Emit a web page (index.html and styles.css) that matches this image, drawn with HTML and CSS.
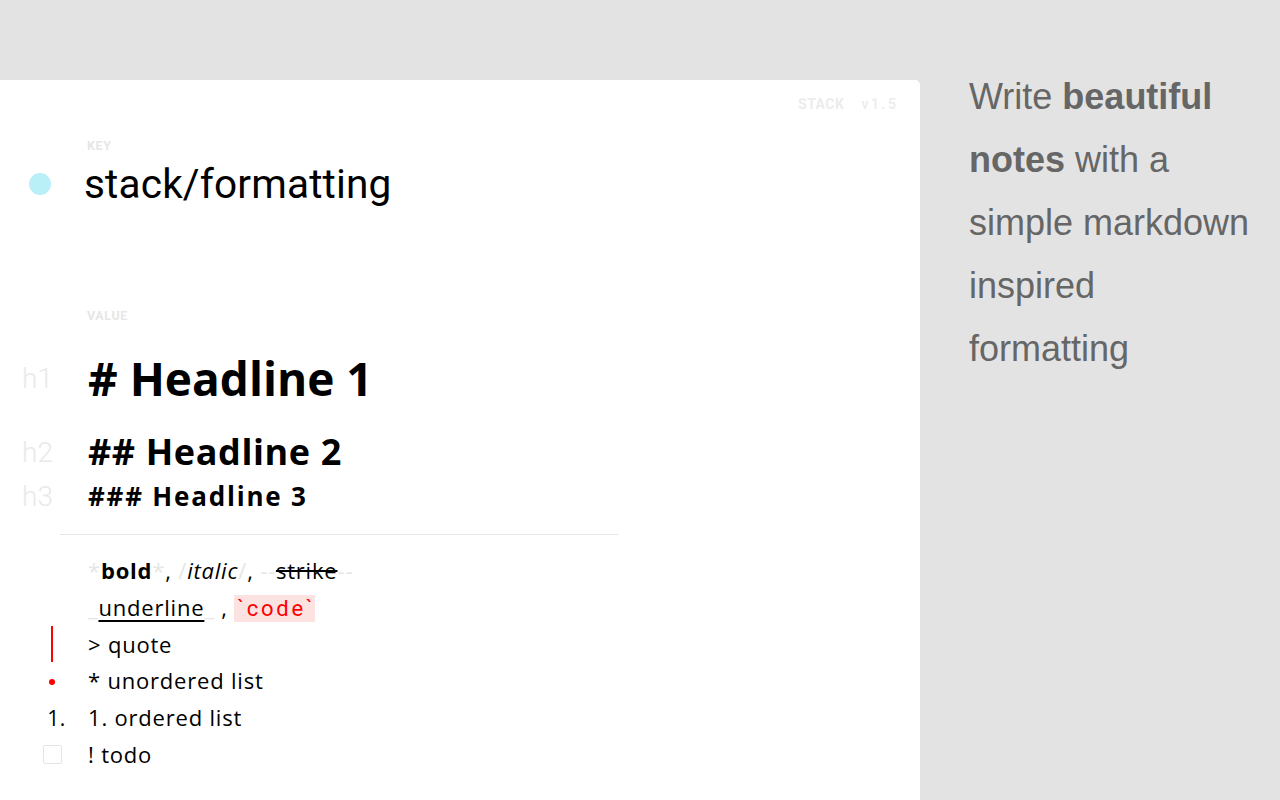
FILE: index.html
```html
<!DOCTYPE html>
<html lang="en">
<head>
<meta charset="utf-8">
<title>Stack – formatting</title>
<link rel="stylesheet" href="styles.css">
</head>
<body>
<div class="page">
  <main class="card">
    <div class="meta"><span class="brand">STACK</span><span class="ver">v1.5</span></div>

    <section class="key">
      <div class="label">KEY</div>
      <div class="row key-row">
        <span class="gutter"><span class="dot"></span></span>
        <span class="key-text">stack/formatting</span>
      </div>
    </section>

    <section class="value">
      <div class="label">VALUE</div>
      <div class="row head h1"><span class="gutter tag">h1</span><span class="text"># Headline 1</span></div>
      <div class="row head h2"><span class="gutter tag">h2</span><span class="text">## Headline 2</span></div>
      <div class="row head h3"><span class="gutter tag">h3</span><span class="text">### Headline 3</span></div>
      <div class="rule"></div>
      <div class="lines">
        <div class="row line"><span class="gutter"></span><span class="text"><span class="faint">*</span><b>bold</b><span class="faint">*</span>, <span class="faint">/</span><i>italic</i><span class="faint">/</span>, <span class="faint">--</span><span class="struck">strike</span><span class="faint">--</span></span></div>
        <div class="row line"><span class="gutter"></span><span class="text"><span class="faint">_</span><span class="under">underline</span><span class="faint">_</span> , <code class="code">`code`</code></span></div>
        <div class="row line"><span class="gutter"><span class="mark"><span class="quote-bar"></span></span></span><span class="text">&gt; quote</span></div>
        <div class="row line"><span class="gutter"><span class="mark"><span class="bullet"></span></span></span><span class="text">* unordered list</span></div>
        <div class="row line"><span class="gutter"><span class="mark num">1.</span></span><span class="text">1. ordered list</span></div>
        <div class="row line"><span class="gutter"><span class="mark"><span class="check"></span></span></span><span class="text">! todo</span></div>
      </div>
    </section>
  </main>

  <aside class="pitch">
    <p>Write <strong>beautiful notes</strong> with a simple markdown inspired formatting</p>
  </aside>
</div>
</body>
</html>
```

FILE: styles.css
```css
* { box-sizing: border-box; }

html, body {
  margin: 0;
  height: 100%;
}

body {
  background: #e3e3e3;
  font-family: "Open Sans", "Noto Sans", sans-serif;
  color: #000;
}

.page {
  display: flex;
  height: 800px;
  overflow: hidden;
}

.card {
  width: 920px;
  flex: none;
  margin-top: 80px;
  height: 720px;
  background: #fff;
  border-radius: 0 5px 0 0;
  padding-top: 15px;
}

.meta {
  display: flex;
  justify-content: flex-end;
  gap: 17px;
  padding-right: 24px;
  font-family: Roboto, sans-serif;
  font-weight: 700;
  font-size: 14px;
  line-height: 18px;
  color: #ececec;
}

.brand { letter-spacing: 0.5px; }
.ver { letter-spacing: 2.6px; font-weight: 500; margin-right: -2.6px; }

.label {
  margin-left: 87px;
  font-family: Roboto, sans-serif;
  font-weight: 700;
  font-size: 12.5px;
  line-height: 14px;
  letter-spacing: 0.6px;
  color: #e6e6e6;
}

.key .label { margin-top: 26px; }

.row {
  display: flex;
  align-items: center;
}

.gutter {
  width: 87px;
  flex: none;
  display: flex;
  align-items: center;
}

.key-row {
  margin-top: 7px;
  height: 48px;
}

.dot {
  width: 22px;
  height: 22px;
  border-radius: 50%;
  background: #b9f0f8;
  margin-left: 29px;
}

.key-text {
  font-family: Roboto, sans-serif;
  font-size: 40.6px;
  line-height: 48px;
  margin-left: -3px;
  letter-spacing: 0.15px;
  color: #000;
}

.value .label { margin-top: 101px; }

.tag {
  font-family: Roboto, sans-serif;
  font-weight: 300;
  font-size: 28px;
  color: #e9e9e9;
  padding-left: 22px;
}

.head .text { font-weight: 700; margin-left: 1px; }

.h1 { margin-top: 25px; height: 60px; }
.h1 .text { font-size: 46px; line-height: 60px; }

.h2 { margin-top: 20px; height: 48px; }
.h2 .text { font-size: 36px; line-height: 48px; letter-spacing: 0.6px; }

.h3 { margin-top: 2px; height: 36px; }
.h3 .text { font-size: 26px; line-height: 36px; letter-spacing: 1.8px; }

.rule {
  margin: 20px 0 0 60px;
  width: 558px;
  height: 1px;
  background: #e6e6e6;
}

.lines { margin-top: 17px; }

.line {
  height: 36.8px;
}

.line .text {
  font-size: 22px;
  line-height: 36.8px;
  letter-spacing: 0.8px;
  margin-left: 1px;
}

.faint { color: #e6e6e6; font-style: normal; font-weight: 400; }
.struck { text-decoration: line-through; text-decoration-thickness: 1.5px; }
.under { text-decoration: underline; text-underline-offset: 4px; text-decoration-thickness: 1.5px; }

.code {
  font-family: Roboto, sans-serif;
  font-size: 22px;
  letter-spacing: 2.7px;
  color: #ff0000;
  background: #fde2e2;
  padding: 1px 0 1px 3px;
  line-height: 25px;
  display: inline-block;
}

.mark {
  width: 60px;
  margin-left: 22px;
  display: flex;
  justify-content: center;
  align-items: center;
}

.quote-bar {
  width: 2px;
  height: 36px;
  background: #ff0000;
}

.bullet {
  width: 6px;
  height: 6px;
  border-radius: 50%;
  background: #ff0000;
  margin-top: 2px;
}

.num {
  font-size: 21px;
  letter-spacing: 0.5px;
  padding-left: 9px;
}

.check {
  width: 19px;
  height: 19px;
  border: 1px solid #e4e4e4;
  border-radius: 2px;
}

.pitch {
  flex: 1;
  padding: 65px 28px 0 49px;
}

.pitch p {
  margin: 0;
  font-family: "Liberation Sans", Arial, sans-serif;
  font-size: 36px;
  line-height: 63px;
  color: #666;
}

.pitch strong { font-weight: 700; }
```
